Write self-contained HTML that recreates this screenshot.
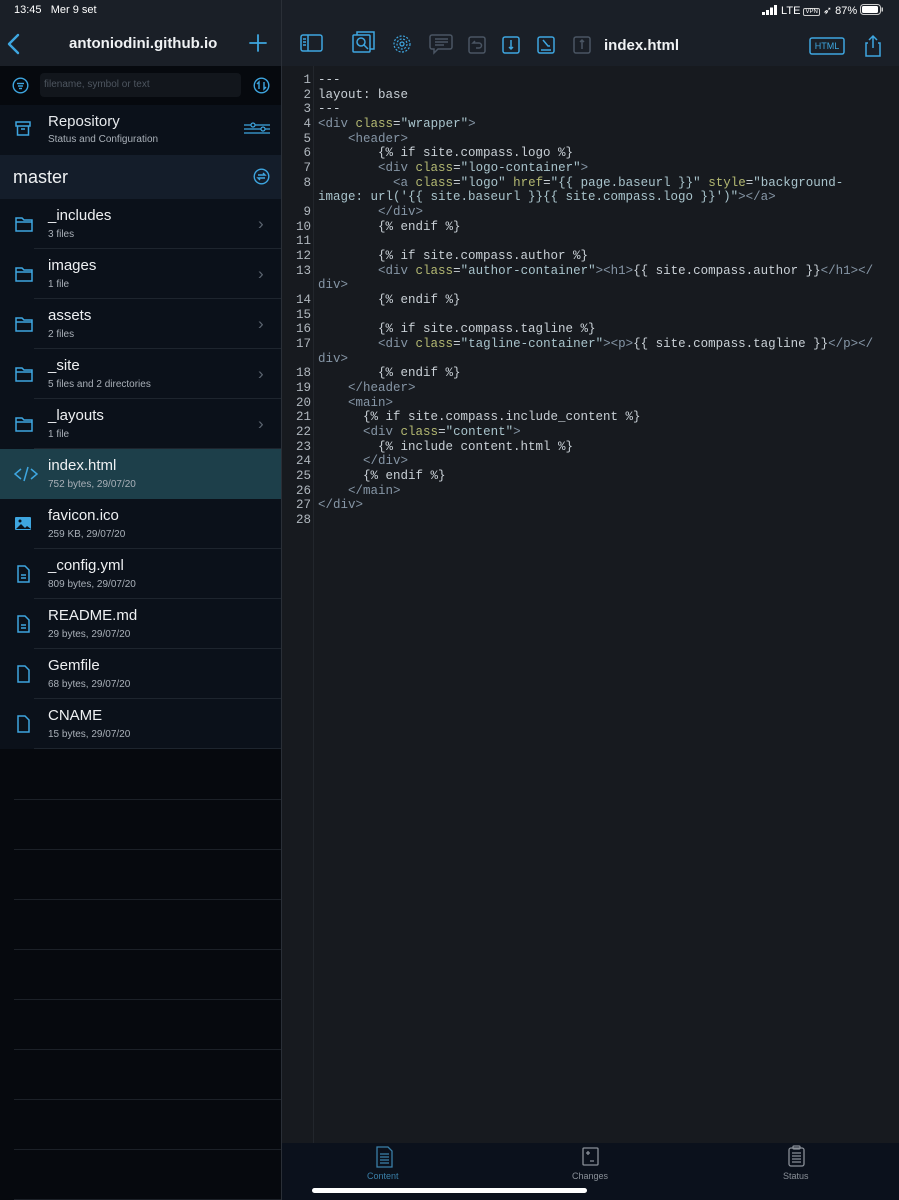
<!DOCTYPE html>
<html><head><meta charset="utf-8"><style>
*{margin:0;padding:0;box-sizing:border-box}
body{width:899px;height:1200px;overflow:hidden;background:#171a1f;font-family:"Liberation Sans",sans-serif;position:relative;color:#e6e9ec}
.abs{position:absolute}
#side{left:0;top:0;width:281px;height:1200px;background:#06090e}
#top{left:0;top:0;width:899px;height:66px;background:#1a1f27}
.vline{left:281px;top:0;width:1px;height:1200px;background:#2a2f37}
.row{position:absolute;left:0;width:281px;height:50px;background:#0b111a}
.row .sep{position:absolute;left:34px;right:0;bottom:0;height:1px;background:#1e252e}
.row .n{position:absolute;left:48px;top:8px;font-size:15px;color:#eef0f2}
.row .s{position:absolute;left:48px;top:30px;font-size:10px;color:#a9b0b8}
.row .ic{position:absolute;left:14px;top:15px}
.row .ch{position:absolute;left:258px;top:15px;color:#5c6570;font-size:17px}
.emp{position:absolute;left:14px;width:267px;height:1px;background:#1c2128}
#code{left:282px;top:66px;width:617px;height:1077px;background:#171a1f}
pre{position:absolute;left:318px;top:73px;font-family:"Liberation Mono",monospace;font-size:12.5px;line-height:14.67px;color:#c9d0d6;white-space:pre}
.ln{position:absolute;left:284px;top:73px;width:27px;text-align:right;font-family:"Liberation Mono",monospace;font-size:12.5px;line-height:14.67px;color:#b0b7be;white-space:pre}
.t{color:#8696a6}.a{color:#b3b872}.v{color:#a9c4cc}
#bot{left:282px;top:1143px;width:617px;height:57px;background:#0b111c}
</style></head><body>
<div id="side" class="abs"></div>
<div id="top" class="abs"></div>
<div class="abs" style="left:14px;top:4px;font-size:11px;color:#fff;white-space:nowrap">13:45&nbsp;&nbsp; Mer 9 set</div>
<div class="abs" style="left:762px;top:4px;font-size:11px;color:#fff;white-space:nowrap">
<svg width="16" height="10" style="vertical-align:-1px" fill="#fff"><rect x="0" y="7" width="3" height="3"/><rect x="4" y="5" width="3" height="5"/><rect x="8" y="2.5" width="3" height="7.5"/><rect x="12" y="0" width="3" height="10"/></svg> LTE <span style="border:1px solid #ccc;font-size:6px;padding:0 1px;border-radius:2px;vertical-align:1px">VPN</span> ➶ 87% <svg width="24" height="11" style="vertical-align:-1px"><rect x="0.5" y="0.5" width="20" height="10" rx="3" fill="none" stroke="#ccc"/><rect x="2" y="2" width="16" height="7" rx="1.5" fill="#fff"/><rect x="21.5" y="3.5" width="1.5" height="4" fill="#ccc"/></svg></div>
<svg class="abs" style="left:6px;top:33px" width="16" height="22" fill="none" stroke="#3ea6e0" stroke-width="2.4" stroke-linecap="round" stroke-linejoin="round"><path d="M12 2L3 11l9 9"/></svg>
<div class="abs" style="left:69px;top:35px;font-size:15px;font-weight:bold;color:#f0f2f4">antoniodini.github.io</div>
<svg class="abs" style="left:248px;top:33px" width="20" height="20" stroke="#3ea6e0" stroke-width="1.8" stroke-linecap="round"><line x1="10" y1="2" x2="10" y2="18"/><line x1="2" y1="10" x2="18" y2="10"/></svg>
<svg class="abs" style="left:298px;top:30px" width="590" height="30" fill="none" stroke="#3ea6e0" stroke-width="1.5">
<rect x="3" y="5" width="21" height="16" rx="2"/><line x1="10" y1="5" x2="10" y2="21"/><line x1="5" y1="9" x2="8" y2="9"/><line x1="5" y1="12" x2="8" y2="12"/><line x1="5" y1="15" x2="8" y2="15"/>
<rect x="55" y="5" width="17" height="17" rx="1"/><path d="M59 5V2h17v17h-4"/><circle cx="63" cy="12" r="4"/><line x1="66" y1="15" x2="70" y2="19"/>
<circle cx="104" cy="14" r="8" stroke-width="1.2" stroke-dasharray="2 1.5"/><circle cx="104" cy="14" r="5" stroke-width="1.2" stroke-dasharray="2 1.5"/><circle cx="104" cy="14" r="2" stroke-width="1.2"/>
<g stroke="#4a5563"><path d="M134 5h18a2 2 0 0 1 2 2v10a2 2 0 0 1-2 2h-12l-4 4v-4h-2a2 2 0 0 1-2-2V7a2 2 0 0 1 2-2z"/><line x1="137" y1="9" x2="150" y2="9"/><line x1="137" y1="12" x2="150" y2="12"/><line x1="137" y1="15" x2="146" y2="15"/>
<rect x="171" y="7" width="16" height="16" rx="2"/><path d="M177 11l-2 2h6a2.5 2.5 0 0 1 0 5h-3"/>
<rect x="276" y="7" width="16" height="16" rx="2"/><path d="M284 19v-9m-2 2l2-2 2 2"/></g>
<rect x="205" y="7" width="16" height="16" rx="2"/><path d="M213 10v9m-2-2l2 2 2-2"/>
<rect x="240" y="7" width="16" height="16" rx="2"/><line x1="243" y1="20" x2="253" y2="20"/><path d="M245 10l5 6h2"/>
<rect x="512" y="8" width="34" height="16" rx="2"/><path d="M571 10l4-4 4 4M575 6v12M570 13h-2v13h14V13h-2"/>
</svg>
<div class="abs" style="left:810px;top:41px;width:34px;text-align:center;font-size:9px;color:#3ea6e0">HTML</div>
<div class="abs" style="left:604px;top:37px;font-size:15px;font-weight:bold;color:#f0f2f4">index.html</div>
<div class="abs" style="left:0;top:66px;width:281px;height:39px;background:#06090e"></div>
<svg class="abs" style="left:12px;top:77px" width="17" height="17" fill="none" stroke="#3ea6e0" stroke-width="1.4"><circle cx="8.5" cy="8.5" r="7.3"/><line x1="5" y1="6.5" x2="12" y2="6.5"/><line x1="6" y1="9" x2="11" y2="9"/><line x1="7" y1="11.5" x2="10" y2="11.5"/></svg>
<div class="abs" style="left:40px;top:73px;width:201px;height:24px;background:#12161c;border-radius:4px;font-size:10px;color:#4e5660;padding:6px 4px">filename, symbol or text</div>
<svg class="abs" style="left:253px;top:77px" width="17" height="17" fill="none" stroke="#3ea6e0" stroke-width="1.4"><circle cx="8.5" cy="8.5" r="7.3"/><path d="M6 12V5l-2 2M11 5v7l2-2"/></svg>
<div class="abs" style="left:0;top:105px;width:281px;height:50px;background:#0b111a"></div>
<svg class="abs" style="left:15px;top:120px" width="17" height="17" fill="none" stroke="#3ea6e0" stroke-width="1.5"><rect x="1" y="2" width="14" height="4"/><path d="M2.5 6v9h11V6"/><line x1="6" y1="9" x2="10" y2="9"/></svg>
<div class="abs" style="left:48px;top:113px;font-size:15px">Repository</div>
<div class="abs" style="left:48px;top:134px;font-size:10px;color:#a9b0b8">Status and Configuration</div>
<svg class="abs" style="left:243px;top:121px" width="28" height="16" fill="none" stroke="#3ea6e0" stroke-width="1.2"><line x1="1" y1="4" x2="27" y2="4"/><line x1="1" y1="8" x2="27" y2="8"/><line x1="1" y1="12" x2="27" y2="12"/><circle cx="10" cy="4" r="2" fill="#0b111a"/><circle cx="20" cy="8" r="2" fill="#0b111a"/></svg>
<div class="abs" style="left:0;top:155px;width:281px;height:44px;background:#141d2a"></div>
<div class="abs" style="left:13px;top:167px;font-size:18px;color:#eef0f2">master</div>
<svg class="abs" style="left:253px;top:168px" width="17" height="17" fill="none" stroke="#3ea6e0" stroke-width="1.4"><circle cx="8.5" cy="8.5" r="7.3"/><path d="M5 7h7l-2-2M12 10H5l2 2"/></svg>
<div class="row" style="top:199px"><svg class="ic" width="20" height="20" fill="none" stroke="#3ea6e0" stroke-width="1.5"><path d="M2 4h6l2 2h8v11H2z"/><line x1="2" y1="8" x2="18" y2="8"/></svg><div class="n">_includes</div><div class="s">3 files</div><div class="ch">›</div><div class="sep"></div></div>
<div class="row" style="top:249px"><svg class="ic" width="20" height="20" fill="none" stroke="#3ea6e0" stroke-width="1.5"><path d="M2 4h6l2 2h8v11H2z"/><line x1="2" y1="8" x2="18" y2="8"/></svg><div class="n">images</div><div class="s">1 file</div><div class="ch">›</div><div class="sep"></div></div>
<div class="row" style="top:299px"><svg class="ic" width="20" height="20" fill="none" stroke="#3ea6e0" stroke-width="1.5"><path d="M2 4h6l2 2h8v11H2z"/><line x1="2" y1="8" x2="18" y2="8"/></svg><div class="n">assets</div><div class="s">2 files</div><div class="ch">›</div><div class="sep"></div></div>
<div class="row" style="top:349px"><svg class="ic" width="20" height="20" fill="none" stroke="#3ea6e0" stroke-width="1.5"><path d="M2 4h6l2 2h8v11H2z"/><line x1="2" y1="8" x2="18" y2="8"/></svg><div class="n">_site</div><div class="s">5 files and 2 directories</div><div class="ch">›</div><div class="sep"></div></div>
<div class="row" style="top:399px"><svg class="ic" width="20" height="20" fill="none" stroke="#3ea6e0" stroke-width="1.5"><path d="M2 4h6l2 2h8v11H2z"/><line x1="2" y1="8" x2="18" y2="8"/></svg><div class="n">_layouts</div><div class="s">1 file</div><div class="ch">›</div><div class="sep"></div></div>
<div class="row" style="top:449px;background:#1d3f4a"><svg class="ic" width="24" height="20" fill="none" stroke="#3ea6e0" stroke-width="1.5"><path d="M7 5L1 10l6 5M17 5l6 5-6 5M14 3l-4 14"/></svg><div class="n">index.html</div><div class="s">752 bytes, 29/07/20</div></div>
<div class="row" style="top:499px"><svg class="ic" width="20" height="20"><rect x="1" y="3" width="16" height="13" rx="1" fill="#3ea6e0"/><path d="M2 15l5-5 4 4 2-2 4 3z" fill="#0b111a"/><circle cx="6" cy="7" r="1.5" fill="#0b111a"/></svg><div class="n">favicon.ico</div><div class="s">259 KB, 29/07/20</div><div class="sep"></div></div>
<div class="row" style="top:549px"><svg class="ic" width="20" height="20" fill="none" stroke="#3ea6e0" stroke-width="1.5"><path d="M4 2h7l4 4v12H4z"/><line x1="7" y1="11" x2="12" y2="11"/><line x1="7" y1="14" x2="12" y2="14"/></svg><div class="n">_config.yml</div><div class="s">809 bytes, 29/07/20</div><div class="sep"></div></div>
<div class="row" style="top:599px"><svg class="ic" width="20" height="20" fill="none" stroke="#3ea6e0" stroke-width="1.5"><path d="M4 2h7l4 4v12H4z"/><line x1="7" y1="11" x2="12" y2="11"/><line x1="7" y1="14" x2="12" y2="14"/></svg><div class="n">README.md</div><div class="s">29 bytes, 29/07/20</div><div class="sep"></div></div>
<div class="row" style="top:649px"><svg class="ic" width="20" height="20" fill="none" stroke="#3ea6e0" stroke-width="1.5"><path d="M4 2h7l4 4v12H4z"/></svg><div class="n">Gemfile</div><div class="s">68 bytes, 29/07/20</div><div class="sep"></div></div>
<div class="row" style="top:699px"><svg class="ic" width="20" height="20" fill="none" stroke="#3ea6e0" stroke-width="1.5"><path d="M4 2h7l4 4v12H4z"/></svg><div class="n">CNAME</div><div class="s">15 bytes, 29/07/20</div><div class="sep"></div></div>
<div class="emp" style="top:799px"></div><div class="emp" style="top:849px"></div><div class="emp" style="top:899px"></div><div class="emp" style="top:949px"></div><div class="emp" style="top:999px"></div><div class="emp" style="top:1049px"></div><div class="emp" style="top:1099px"></div><div class="emp" style="top:1149px"></div><div class="emp" style="top:1199px"></div>
<div id="code" class="abs"></div>
<div class="abs" style="left:313px;top:66px;width:1px;height:1077px;background:#22262c"></div>
<div class="ln">1
2
3
4
5
6
7
8

9
10
11
12
13

14
15
16
17

18
19
20
21
22
23
24
25
26
27
28</div>
<pre>---
layout: base
---
<span class="t">&lt;div</span> <span class="a">class</span>=<span class="v">"wrapper"</span><span class="t">&gt;</span>
    <span class="t">&lt;header&gt;</span>
        {% if site.compass.logo %}
        <span class="t">&lt;div</span> <span class="a">class</span>=<span class="v">"logo-container"</span><span class="t">&gt;</span>
          <span class="t">&lt;a</span> <span class="a">class</span>=<span class="v">"logo"</span> <span class="a">href</span>=<span class="v">"{{ page.baseurl }}"</span> <span class="a">style</span>=<span class="v">"background-</span>
<span class="v">image: url('{{ site.baseurl }}{{ site.compass.logo }}')"</span><span class="t">&gt;&lt;/a&gt;</span>
        <span class="t">&lt;/div&gt;</span>
        {% endif %}

        {% if site.compass.author %}
        <span class="t">&lt;div</span> <span class="a">class</span>=<span class="v">"author-container"</span><span class="t">&gt;&lt;h1&gt;</span>{{ site.compass.author }}<span class="t">&lt;/h1&gt;&lt;/</span>
<span class="t">div&gt;</span>
        {% endif %}

        {% if site.compass.tagline %}
        <span class="t">&lt;div</span> <span class="a">class</span>=<span class="v">"tagline-container"</span><span class="t">&gt;&lt;p&gt;</span>{{ site.compass.tagline }}<span class="t">&lt;/p&gt;&lt;/</span>
<span class="t">div&gt;</span>
        {% endif %}
    <span class="t">&lt;/header&gt;</span>
    <span class="t">&lt;main&gt;</span>
      {% if site.compass.include_content %}
      <span class="t">&lt;div</span> <span class="a">class</span>=<span class="v">"content"</span><span class="t">&gt;</span>
        {% include content.html %}
      <span class="t">&lt;/div&gt;</span>
      {% endif %}
    <span class="t">&lt;/main&gt;</span>
<span class="t">&lt;/div&gt;</span>
</pre>
<div id="bot" class="abs"></div>
<svg class="abs" style="left:374px;top:1146px" width="22" height="22" fill="none" stroke="#3a7fa8" stroke-width="1.3"><path d="M3 1h11l4 4v16H3z"/><line x1="6" y1="8" x2="15" y2="8"/><line x1="6" y1="11" x2="15" y2="11"/><line x1="6" y1="14" x2="15" y2="14"/><line x1="6" y1="17" x2="15" y2="17"/></svg>
<div class="abs" style="left:367px;top:1171px;font-size:9px;color:#3a7fa8">Content</div>
<svg class="abs" style="left:580px;top:1146px" width="22" height="22" fill="none" stroke="#8a9098" stroke-width="1.3"><rect x="3" y="2" width="15" height="17" rx="1"/><path d="M6 7h4M8 5v4M10 15h4"/></svg>
<div class="abs" style="left:572px;top:1171px;font-size:9px;color:#8a9098">Changes</div>
<svg class="abs" style="left:786px;top:1145px" width="22" height="22" fill="none" stroke="#8a9098" stroke-width="1.3"><rect x="3" y="3" width="15" height="18" rx="2"/><rect x="7" y="1" width="7" height="3" rx="1"/><path d="M6 8h9M6 11h9M6 14h9M6 17h9"/></svg>
<div class="abs" style="left:783px;top:1171px;font-size:9px;color:#8a9098">Status</div>
<div class="abs" style="left:312px;top:1188px;width:275px;height:5px;border-radius:3px;background:#fff"></div>
<div class="vline abs"></div>
</body></html>
